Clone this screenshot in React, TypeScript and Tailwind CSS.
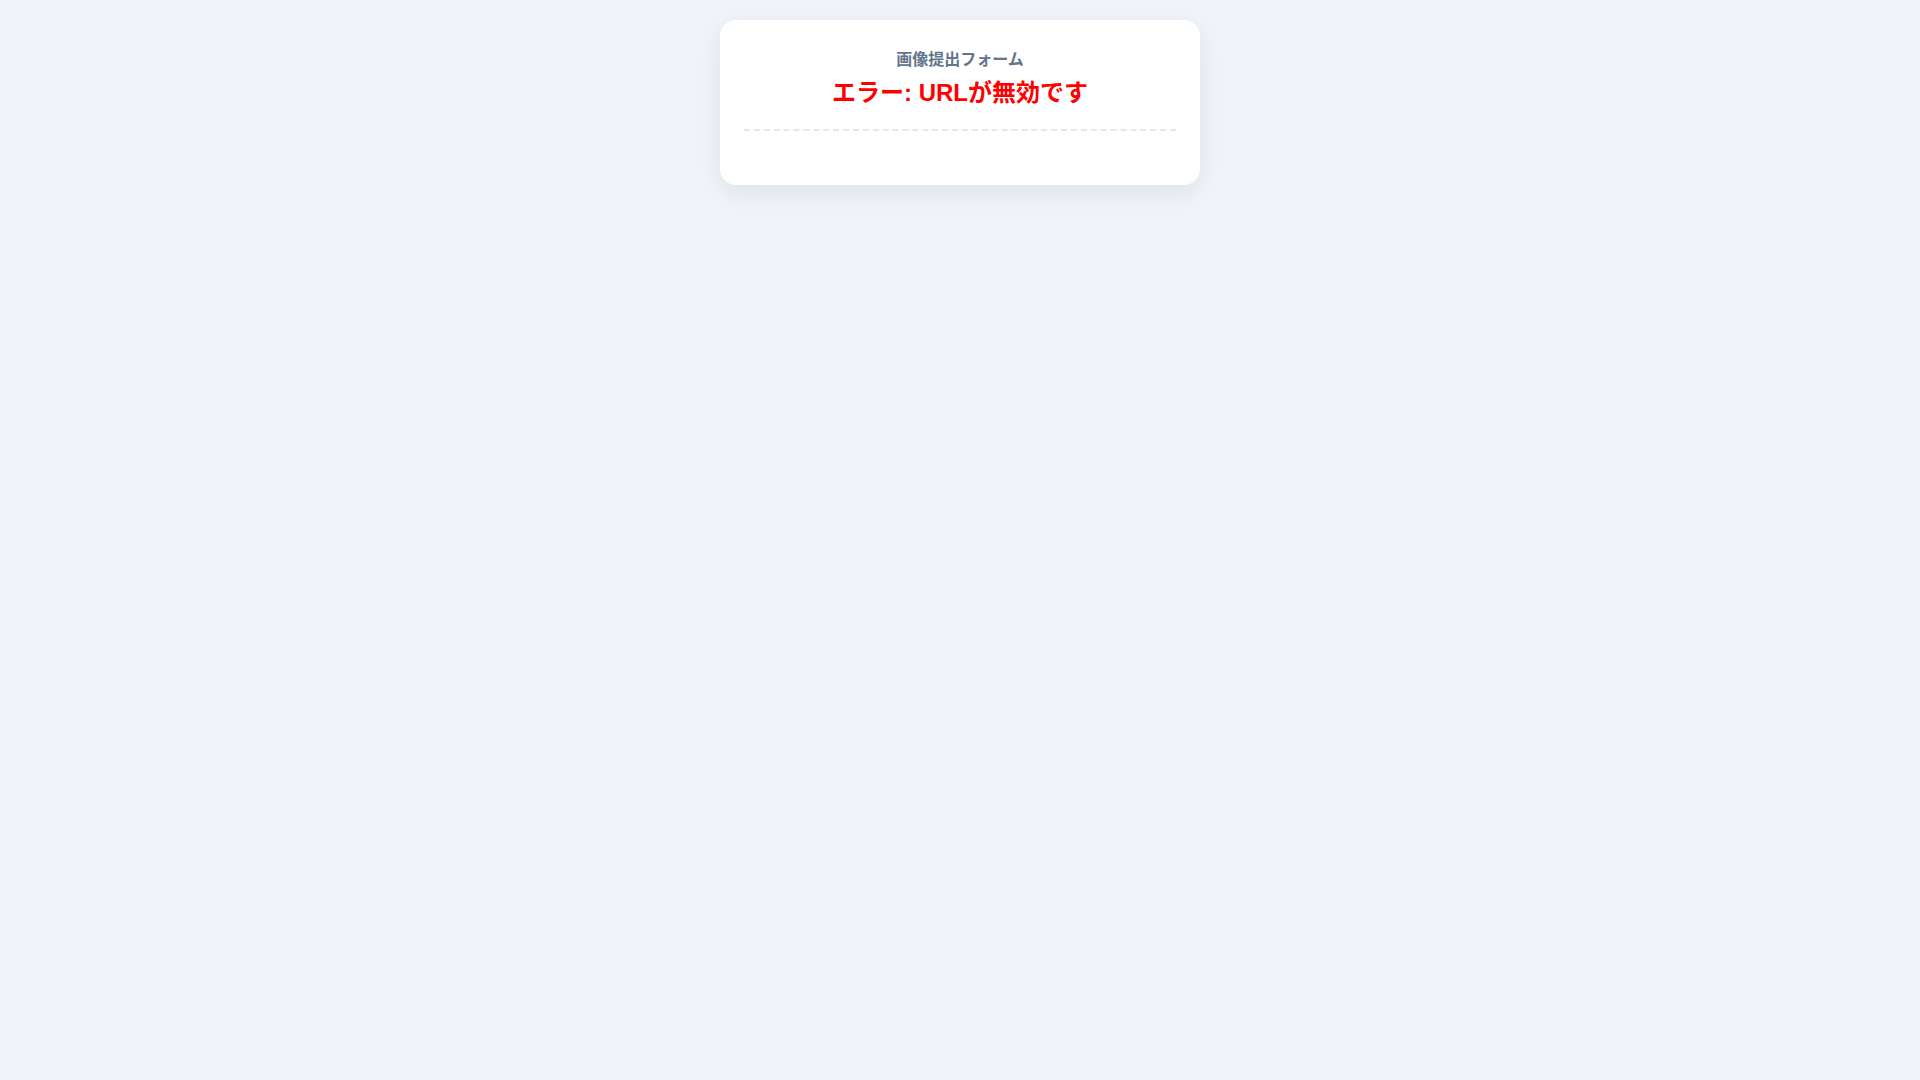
export default function App() {
  return (
    <div
      className="min-h-screen w-full bg-[#f0f4f8] pt-5"
      style={{ fontFamily: '"Liberation Sans", Arial, "Noto Sans CJK JP", sans-serif' }}
    >
      <div className="mx-auto w-[480px] rounded-2xl bg-white px-6 pt-[28px] shadow-[0_8px_24px_rgba(15,23,42,0.08)]">
        <div className="border-b-2 border-dashed border-[#e2e8f0] pb-5 text-center">
          <h2 className="mb-[5px] text-base font-semibold leading-6 text-[#64748b]">画像提出フォーム</h2>
          <h1 className="text-2xl font-bold leading-8 text-[#ff0000]">エラー: URLが無効です</h1>
        </div>
        <div className="h-[54px]" />
      </div>
    </div>
  );
}
